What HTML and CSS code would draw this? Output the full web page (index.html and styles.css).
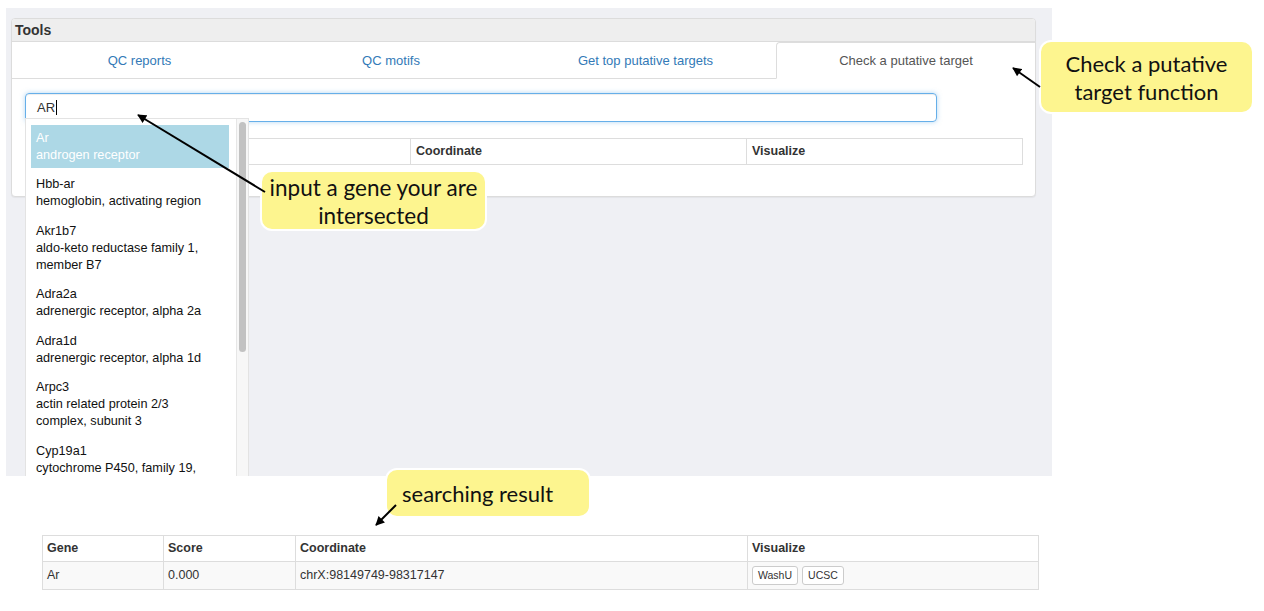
FILE: index.html
```html
<!DOCTYPE html>
<html>
<head>
<meta charset="utf-8">
<title>Tools</title>
<link rel="stylesheet" href="styles.css">
</head>
<body>
<div class="shot">
  <div class="panel">
    <div class="panel-heading">Tools</div>
    <ul class="tabs">
      <li class="tab w1"><a>QC reports</a></li>
      <li class="tab w2"><a>QC motifs</a></li>
      <li class="tab w3"><a>Get top putative targets</a></li>
      <li class="tab w4 active"><a>Check a putative target</a></li>
    </ul>
    <div class="panel-body">
      <div class="search">
        <div class="input">AR<span class="caret"></span></div>
        <div class="dropdown">
          <ul class="options">
            <li class="option selected"><div>Ar</div><div>androgen receptor</div></li>
            <li class="option"><div>Hbb-ar</div><div>hemoglobin, activating region</div></li>
            <li class="option"><div>Akr1b7</div><div>aldo-keto reductase family 1,<br>member B7</div></li>
            <li class="option"><div>Adra2a</div><div>adrenergic receptor, alpha 2a</div></li>
            <li class="option"><div>Adra1d</div><div>adrenergic receptor, alpha 1d</div></li>
            <li class="option"><div>Arpc3</div><div>actin related protein 2/3<br>complex, subunit 3</div></li>
            <li class="option"><div>Cyp19a1</div><div>cytochrome P450, family 19,</div></li>
          </ul>
          <div class="scrollbar"><div class="thumb"></div></div>
        </div>
      </div>
      <table class="grid top">
        <colgroup><col class="c-gene"><col class="c-score"><col class="c-coord"><col class="c-vis"></colgroup>
        <thead><tr><th></th><th></th><th>Coordinate</th><th>Visualize</th></tr></thead>
      </table>
    </div>
  </div>
</div>

<div class="result">
  <table class="grid bottom">
    <colgroup><col class="b-gene"><col class="b-score"><col class="b-coord"><col class="b-vis"></colgroup>
    <thead><tr><th>Gene</th><th>Score</th><th>Coordinate</th><th>Visualize</th></tr></thead>
    <tbody><tr><td>Ar</td><td>0.000</td><td>chrX:98149749-98317147</td><td><span class="btn">WashU</span><span class="btn">UCSC</span></td></tr></tbody>
  </table>
</div>

<div class="callout c1">Check a putative<br>target function</div>
<div class="callout c2">input a gene your are<br>intersected</div>
<div class="callout c3">searching result</div>

<svg class="arrows" width="1264" height="611" viewBox="0 0 1264 611">
  <defs>
    <marker id="head" viewBox="0 0 10 10" refX="9" refY="5" markerWidth="10" markerHeight="9" markerUnits="userSpaceOnUse" orient="auto">
      <path d="M0 0 L10 5 L0 10 Z" fill="#000"/>
    </marker>
  </defs>
  <line x1="1040" y1="87" x2="1013" y2="68" stroke="#000" stroke-width="2" marker-end="url(#head)"/>
  <line x1="265" y1="192" x2="138" y2="115" stroke="#000" stroke-width="2" marker-end="url(#head)"/>
  <line x1="396" y1="505" x2="376" y2="525" stroke="#000" stroke-width="2" marker-end="url(#head)"/>
</svg>
</body>
</html>
```

FILE: styles.css
```css
* { box-sizing: border-box; }
html, body { margin: 0; padding: 0; }
body {
  background: #fff;
  font-family: "Liberation Sans", Arial, Helvetica, sans-serif;
  color: #333;
  width: 1264px;
  height: 611px;
  overflow: hidden;
  position: relative;
}

.shot {
  margin: 8px 0 0 6px;
  width: 1046px;
  height: 468px;
  padding: 10px 0 0 5px;
  background: #eff0f4;
  overflow: hidden;
}

.panel {
  width: 1025px;
  background: #fff;
  border: 1px solid #dcdcdc;
  border-radius: 4px;
  box-shadow: 0 1px 1px rgba(0,0,0,0.05);
}
.panel-heading {
  height: 23px;
  line-height: 23px;
  padding: 0 3px;
  background: #eeeeee;
  border-bottom: 1px solid #dcdcdc;
  border-radius: 3px 3px 0 0;
  font-size: 14px;
  font-weight: bold;
  color: #333;
}

.tabs {
  list-style: none;
  margin: 0;
  padding: 0;
  display: flex;
  border-bottom: 1px solid #ddd;
  height: 37px;
}
.tab {
  text-align: center;
  font-size: 13px;
  margin-bottom: -1px;
}
.tab a {
  display: block;
  height: 36px;
  line-height: 37px;
  color: #337ab7;
  border: 1px solid transparent;
  border-top: 0;
}
.w1 { width: 255px; }
.w2 { width: 248px; }
.w3 { width: 261px; }
.w4 { width: 259px; }
.tab.active a {
  color: #555;
  background: #fff;
  height: 37px;
  line-height: 36px;
  border: 1px solid #ddd;
  border-bottom-color: #fff;
  border-right: 0;
  border-radius: 4px 0 0 0;
}

.panel-body {
  padding: 14px 13px 31px;
}
.search {
  position: relative;
}
.input {
  width: 912px;
  height: 29px;
  padding: 0 11px;
  line-height: 27px;
  font-size: 13px;
  color: #333;
  border: 1px solid #66afe9;
  border-radius: 4px;
  box-shadow: inset 0 1px 1px rgba(0,0,0,0.075), 0 0 5px rgba(102,175,233,0.5);
}
.caret {
  display: inline-block;
  width: 1px;
  height: 15px;
  background: #000;
  vertical-align: -3px;
  margin-left: 1px;
}

.dropdown {
  position: absolute;
  left: 0;
  top: 25px;
  width: 224px;
  height: 420px;
  background: #fff;
  border: 1px solid #e3e3e3;
  padding: 6px 0 0 5px;
  z-index: 5;
}
.options {
  list-style: none;
  margin: 0;
  padding: 0;
  width: 198px;
}
.option {
  padding: 4.5px 5px;
  margin-bottom: 3.5px;
  font-size: 12.7px;
  line-height: 17px;
  color: #111;
  white-space: nowrap;
}
.option.selected {
  background: #add8e6;
  color: #fff;
}
.scrollbar {
  position: absolute;
  top: 0;
  right: 0;
  bottom: 0;
  width: 12px;
  background: #f7f7f7;
  border-left: 1px solid #e6e6e6;
  padding: 3px 2px 0 2px;
}
.thumb {
  width: 7px;
  height: 230px;
  background: #c2c2c2;
  border-radius: 4px;
}

.grid {
  border-collapse: collapse;
  table-layout: fixed;
  font-size: 12.5px;
}
.grid th, .grid td {
  border: 1px solid #ddd;
  text-align: left;
  padding: 4px 4px;
  line-height: 17px;
  color: #333;
}
.grid th { font-weight: bold; background: #fff; }
.grid tbody td { background: #f9f9f9; height: 28px; }

.top { width: 997px; margin-top: 16px; }
.top th { padding-left: 5px; }
.c-gene { width: 145px; }
.c-score { width: 240px; }
.c-coord { width: 336px; }
.c-vis { width: 276px; }

.result {
  margin: 59px 0 0 42px;
}
.bottom { width: 996px; }
.b-gene { width: 121px; }
.b-score { width: 132px; }
.b-coord { width: 452px; }
.b-vis { width: 291px; }

.btn {
  display: inline-block;
  height: 19px;
  line-height: 17px;
  padding: 0 5px;
  margin-right: 4px;
  font-size: 10.5px;
  color: #333;
  background: #fff;
  border: 1px solid #ccc;
  border-radius: 3px;
  vertical-align: middle;
}

.callout {
  position: absolute;
  background: #fdf58f;
  border: 2px solid #fff;
  border-radius: 12px;
  font-family: Lato, "Open Sans", sans-serif;
  font-size: 22.5px;
  line-height: 28px;
  color: #111;
  text-align: center;
  z-index: 10;
}
.c1 { left: 1039px; top: 40px; width: 215px; height: 74px; padding-top: 8px; font-size: 22px; }
.c2 { left: 260px; top: 170px; width: 227px; height: 61px; padding-top: 2px; }
.c3 { left: 385px; top: 468px; width: 206px; height: 50px; padding: 10px 0 0 15px; text-align: left; font-size: 22px; }

.arrows {
  position: absolute;
  left: 0;
  top: 0;
  pointer-events: none;
  z-index: 20;
}
```
